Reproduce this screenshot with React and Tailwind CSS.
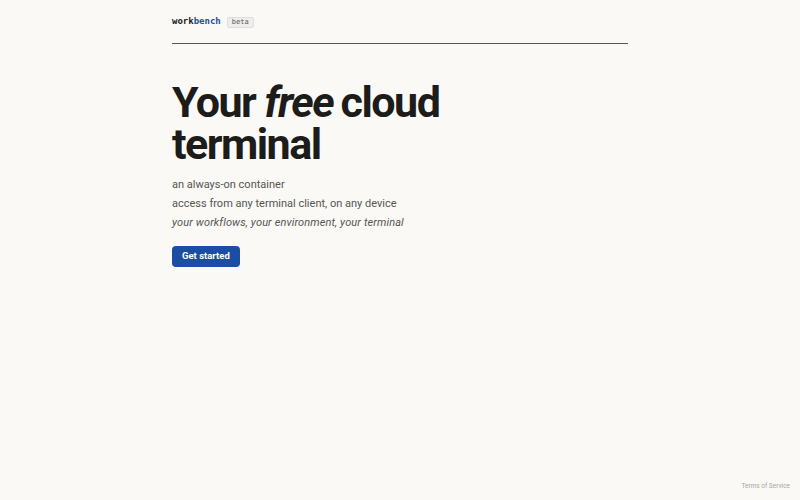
export default function App() {
  return (
    <div
      className="relative flex h-[500px] w-full flex-col bg-[#faf9f6] text-[#1c1c1a]"
      style={{ fontFamily: "Roboto, 'Noto Sans', sans-serif" }}
    >
      <div className="mx-auto w-[456px]">
        {/* header */}
        <div className="flex h-[44px] items-center gap-[6px] border-b border-[#555555] pt-[1px]">
          <div className="text-[9px] font-bold" style={{ fontFamily: "'DejaVu Sans Mono', monospace" }}>
            work<span className="text-[#1f4fa3]">bench</span>
          </div>
          <div
            className="rounded-[2px] border border-[#dddddd] bg-[#eeeeec] px-[4px] text-[7px] leading-[9px] text-[#555555]"
            style={{ fontFamily: "'DejaVu Sans Mono', monospace" }}
          >
            beta
          </div>
        </div>

        {/* hero */}
        <h1 className="mt-[37px] text-[43px] font-bold leading-[42px] tracking-[-0.035em]">
          Your <i className="mr-[-2px] font-bold">free</i> cloud
          <br />
          terminal
        </h1>

        <div className="mt-[10px] text-[11px] leading-[19px] text-[#555553]">
          <div>an always-on container</div>
          <div>access from any terminal client, on any device</div>
          <div className="italic tracking-[0.01em]">your workflows, your environment, your terminal</div>
        </div>

        <button className="mt-[14px] h-[21px] rounded-[4px] bg-[#1b4ea3] px-[10px] text-[9.5px] font-bold text-white">
          Get started
        </button>
      </div>

      <div className="absolute bottom-[8px] right-[10px] text-[6.5px] text-[#a5a5a3]">Terms of Service</div>
    </div>
  );
}
